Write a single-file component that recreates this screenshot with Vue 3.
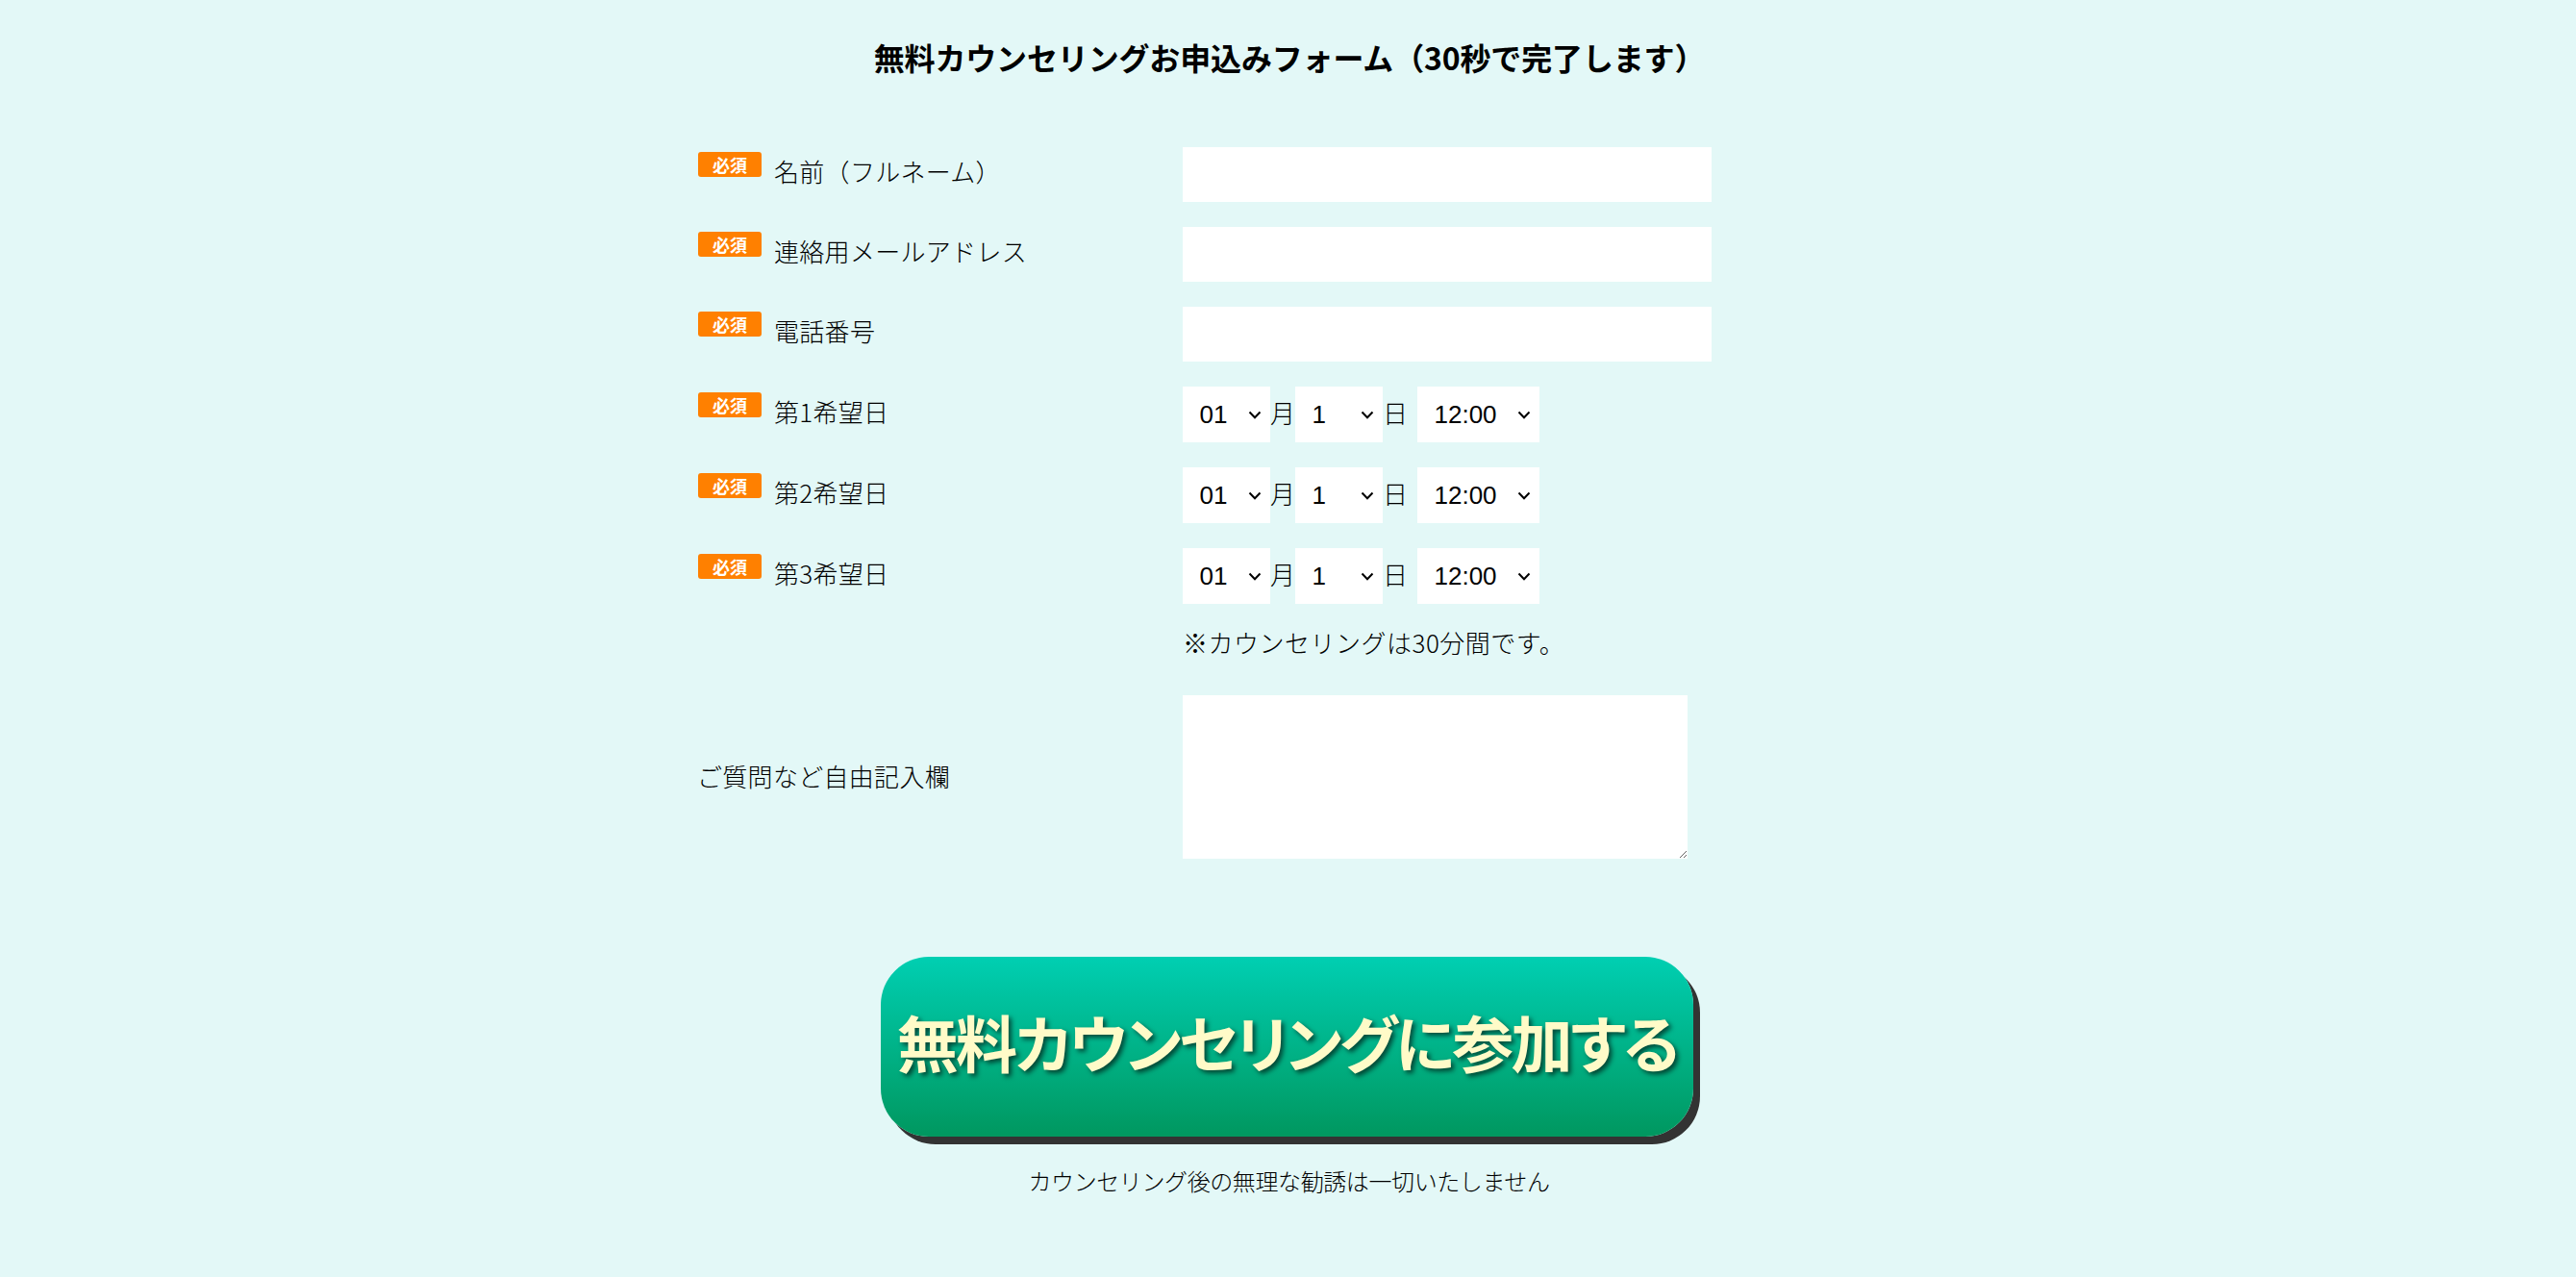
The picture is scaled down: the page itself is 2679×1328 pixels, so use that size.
<template>
  <main class="page">
    <h1 class="title">無料カウンセリングお申込みフォーム（30秒で完了します）</h1>

    <form class="form" @submit.prevent>
      <div v-for="field in textFields" :key="field" class="row">
        <label class="label"><span class="badge">必須</span>{{ field }}</label>
        <input class="text-input" type="text" />
      </div>

      <div v-for="wish in wishes" :key="wish" class="row row-date">
        <label class="label"><span class="badge">必須</span>{{ wish }}</label>
        <div class="date-group">
          <select class="sel sel-short">
            <option v-for="m in months" :key="m">{{ m }}</option>
          </select>
          <span class="unit">月</span>
          <select class="sel sel-short">
            <option v-for="d in 31" :key="d">{{ d }}</option>
          </select>
          <span class="unit">日</span>
          <select class="sel sel-time">
            <option v-for="t in times" :key="t">{{ t }}</option>
          </select>
        </div>
      </div>

      <div class="row row-note">
        <span></span>
        <p class="note">※カウンセリングは30分間です。</p>
      </div>

      <div class="row row-free">
        <label class="label label-free">ご質問など自由記入欄</label>
        <textarea class="free-text"></textarea>
      </div>

      <div class="submit-area">
        <button class="submit" type="submit">無料カウンセリングに参加する</button>
        <p class="sub-note">カウンセリング後の無理な勧誘は一切いたしません</p>
      </div>
    </form>
  </main>
</template>

<script setup>
const textFields = ['名前（フルネーム）', '連絡用メールアドレス', '電話番号'];
const wishes = ['第1希望日', '第2希望日', '第3希望日'];
const months = ['01', '02', '03', '04', '05', '06', '07', '08', '09', '10', '11', '12'];
const times = ['12:00', '13:00', '14:00', '15:00', '16:00', '17:00', '18:00'];
</script>

<style>
html, body {
  margin: 0;
  background: #e3f8f7;
}
</style>

<style scoped>
.page {
  min-height: 1328px;
  box-sizing: border-box;
  padding-top: 35px;
  background: #e3f8f7;
  color: #000;
  font-family: "Noto Sans CJK JP", "Liberation Sans", sans-serif;
  font-weight: 300;
}

.title {
  margin: 0 0 70px;
  padding-left: 3px;
  font-size: 32px;
  line-height: 48px;
  font-weight: 700;
  letter-spacing: -0.15px;
  text-align: center;
  color: #000;
}

.form {
  width: 1227px;
  margin: 0 auto;
}

.row {
  display: grid;
  grid-template-columns: 504px 1fr;
  margin-bottom: 26px;
}

.label {
  display: flex;
  align-items: center;
  font-size: 26px;
  line-height: 38px;
  height: 49px;
  letter-spacing: 0.3px;
}

.badge {
  width: 66px;
  height: 26px;
  margin-right: 13px;
  margin-top: -14px;
  border-radius: 3px;
  background: #ff8000;
  color: #fff;
  font-size: 18px;
  line-height: 26px;
  font-weight: 700;
  letter-spacing: 0;
  text-align: center;
}

.row-date .label {
  height: 51px;
}

.text-input {
  width: 550px;
  height: 57px;
  box-sizing: border-box;
  border: none;
  background: #fff;
}

.date-group {
  display: flex;
  align-items: center;
}

.sel {
  appearance: none;
  height: 58px;
  box-sizing: border-box;
  border: none;
  border-radius: 0;
  padding: 0 0 0 17.5px;
  background: #fff url("data:image/svg+xml,%3Csvg xmlns='http://www.w3.org/2000/svg' width='14' height='9' viewBox='0 0 14 9'%3E%3Cpath d='M1.5 1.5 7 7.2 12.5 1.5' fill='none' stroke='%23000' stroke-width='2'/%3E%3C/svg%3E") no-repeat right 9px center;
  color: #000;
  font-family: "Liberation Sans", sans-serif;
  font-size: 26px;
}

.sel-short {
  width: 91px;
}

.sel-time {
  width: 127px;
  margin-left: 10px;
}

.unit {
  font-size: 26px;
  line-height: 38px;
  width: 26px;
  margin-top: -5px;
}

.row-note {
  margin-bottom: 36px;
}

.note {
  margin: -5px 0 0;
  font-size: 26px;
  line-height: 38px;
  letter-spacing: 0.5px;
}

.row-free {
  margin-bottom: 0;
}

.label-free {
  height: auto;
  margin: -3px 0 0 -1px;
}

.free-text {
  display: block;
  width: 525px;
  height: 170px;
  box-sizing: border-box;
  border: none;
  background: #fff;
}

.submit-area {
  width: 845px;
  margin: 102px 0 0 190px;
  text-align: center;
}

.submit {
  display: block;
  width: 845px;
  height: 187px;
  border: none;
  border-radius: 50px;
  background: linear-gradient(#00cfb2, #00975f);
  box-shadow: 7px 8px 0 #333;
  color: #fffbc8;
  font-family: inherit;
  font-size: 64px;
  font-feature-settings: "palt";
  letter-spacing: -2.6px;
  font-weight: 700;
  text-shadow: 3px 3px 5px rgba(0, 0, 0, 0.6);
  padding: 0 0 14px;
  white-space: nowrap;
}

.sub-note {
  margin: 28px 0 0;
  padding-left: 4px;
  font-size: 24px;
  line-height: 36px;
  letter-spacing: -0.4px;
}
</style>
